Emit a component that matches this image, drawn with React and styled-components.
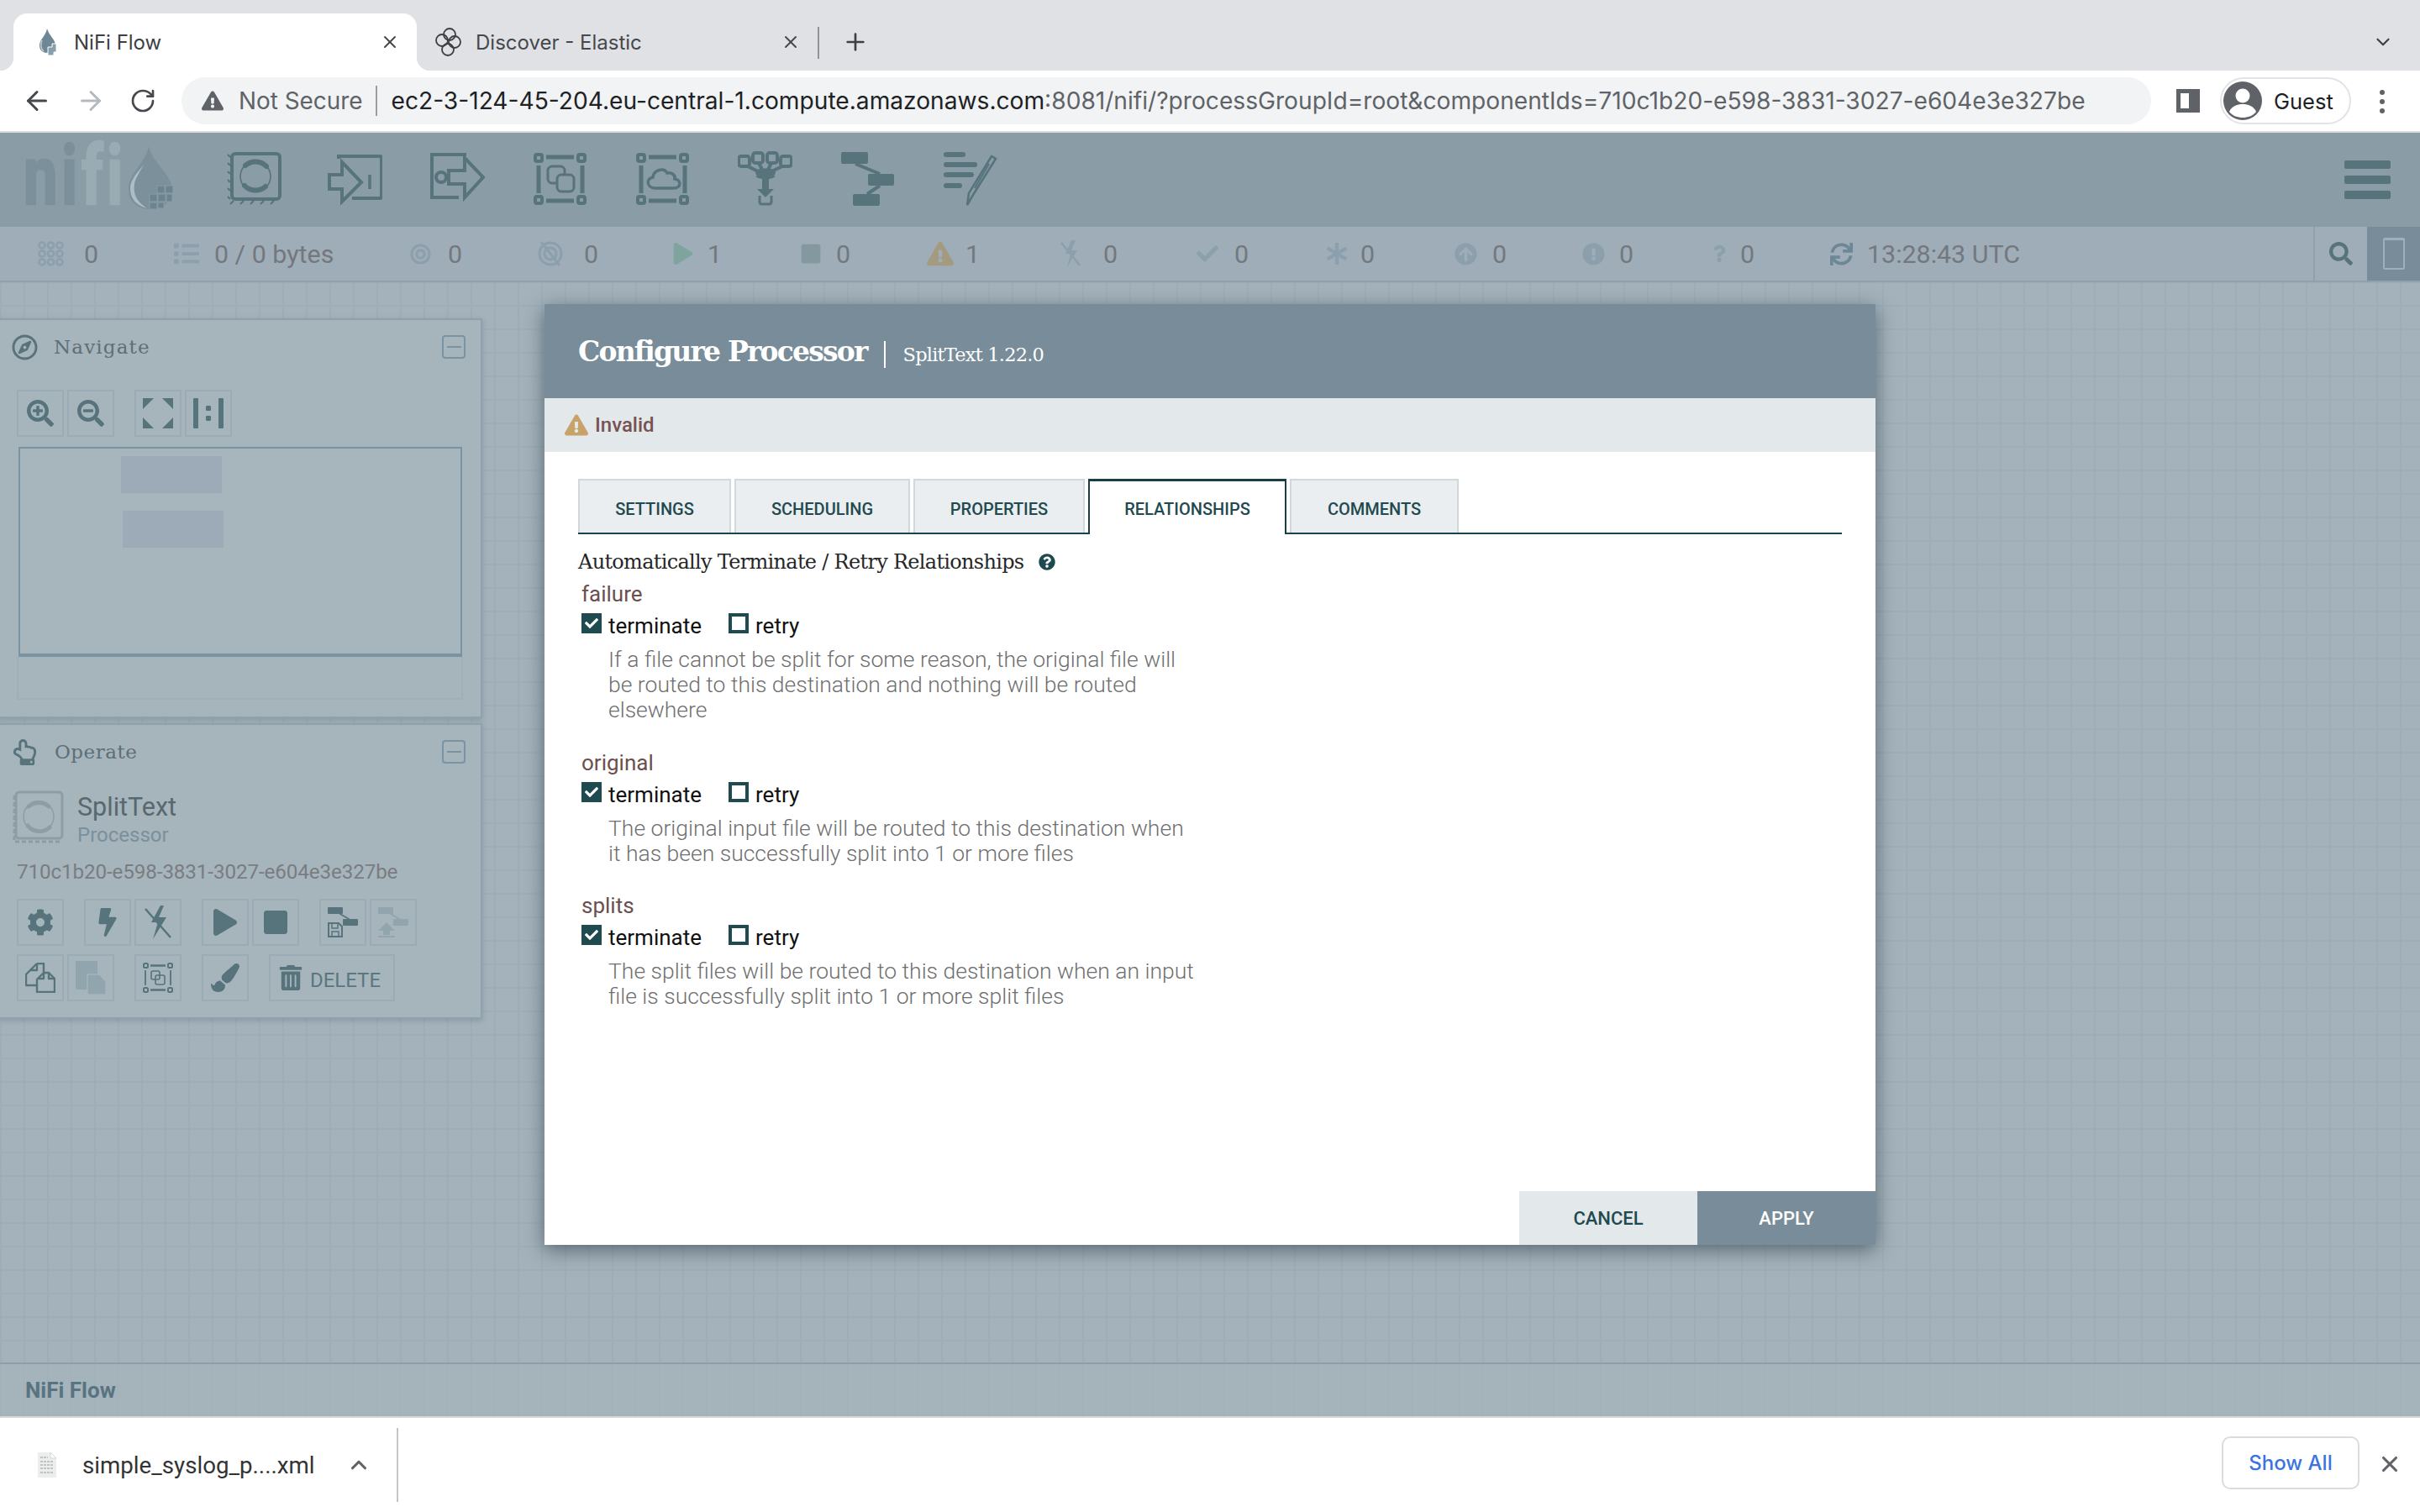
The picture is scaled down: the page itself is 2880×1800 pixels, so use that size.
import React from 'react';
import styled, { createGlobalStyle } from 'styled-components';
import { ArrowLeft, ArrowRight, RotateCw, X, Plus, ChevronDown, ChevronUp } from 'lucide-react';
import {
  FaCog, FaBolt, FaPlay, FaStop, FaSearch, FaTrashAlt, FaPaintBrush, FaRegCompass, FaRegHandPointUp,
  FaExclamationTriangle, FaQuestionCircle, FaCheck, FaSync, FaAsterisk, FaExclamationCircle, FaArrowCircleUp,
  FaQuestion, FaList, FaBullseye, FaSearchPlus, FaSearchMinus,
} from 'react-icons/fa';

const C = '#57737c';
const SLAB = '"DejaVu Serif", "Liberation Serif", serif';
const ROBOTO = 'Roboto, "Liberation Sans", sans-serif';
const UI = 'Inter, "Liberation Sans", sans-serif';

const Global = createGlobalStyle`
  html, body { margin: 0; padding: 0; background: #fff; }
  * { box-sizing: border-box; }
`;

const Page = styled.div`
  width: 2880px; height: 1800px; display: flex; flex-direction: column; overflow: hidden;
  font-family: ${ROBOTO};
`;

/* browser chrome */
const TabStrip = styled.div`
  height: 84px; background: #dfe1e5; display: flex; align-items: flex-end; padding-left: 16px; position: relative;
  font-family: ${UI}; font-size: 24px; color: #3c4043;
`;
const BrowserTab = styled.div`
  height: 68px; width: ${p => p.$w}px; display: flex; align-items: center; padding-left: ${p => p.$pad}px; position: relative;
  background: ${p => (p.$active ? '#fff' : 'transparent')};
  border-radius: 16px 16px 0 0;
  color: ${p => (p.$active ? '#3c4043' : '#45484c')};
  ${p => p.$active && `
    &::before, &::after { content: ''; position: absolute; bottom: 0; width: 16px; height: 16px; }
    &::before { left: -16px; background: radial-gradient(circle at 0 0, transparent 16px, #fff 16.5px); }
    &::after { right: -16px; background: radial-gradient(circle at 100% 0, transparent 16px, #fff 16.5px); }
  `}
`;
const TabTitle = styled.span` flex: 1; margin-left: ${p => p.$ml}px; white-space: nowrap; `;
const TabClose = styled(X)` margin-right: ${p => p.$mr}px; color: #45484c; `;
const TabDivider = styled.div` width: 2px; height: 38px; background: #8f9296; margin: 0 0 14px 0; `;
const NewTab = styled(Plus)` margin: 0 0 18px 27px; color: #3c4043; `;
const StripEnd = styled(ChevronDown)` position: absolute; right: 31px; top: 37px; color: #3c4043; `;

const Toolbar = styled.div`
  height: 74px; background: #fff; border-bottom: 2px solid #dcdcdc; display: flex; align-items: flex-start; padding: 8px 0 0 0;
  font-family: ${UI};
`;
const NavIcons = styled.div` width: 216px; height: 56px; display: flex; align-items: center; padding-left: 26px; gap: 28px; `;
const Omnibox = styled.div`
  width: 2344px; height: 56px; background: #f1f3f4; border-radius: 28px; display: flex; align-items: center; padding-left: 24px;
  font-size: 28.15px; white-space: nowrap;
`;
const NotSecure = styled.span` color: #5f6368; margin-left: 18px; padding-right: 15px; border-right: 2px solid #9a9da1; line-height: 36px; font-size: 27.9px; `;
const UrlHost = styled.span` color: #202124; margin-left: 17px; `;
const UrlRest = styled.span` color: #5f6368; `;
const SidePanel = styled.div`
  width: 28px; height: 28px; margin: 14px 0 0 30px; border: 5px solid #5f6368; border-right-width: 13px; background: #fff;
`;
const GuestPill = styled.div`
  width: 156px; height: 56px; margin-left: 24px; border: 2px solid #e2e3e5; border-radius: 28px; display: flex; align-items: center; padding-left: 2px;
  font-size: 25.5px; color: #202124;
  svg { margin-right: 14px; }
`;
const Kebab = styled.div`
  width: 6px; margin: 15px 0 0 34px; display: flex; flex-direction: column; gap: 5px;
  i { display: block; width: 6px; height: 6px; border-radius: 50%; background: #5f6368; }
`;

/* NiFi header */
const Header = styled.div`
  height: 112px; background: #8a9ca6; display: flex; align-items: flex-start; position: relative; padding-left: 28px;
`;
const LogoText = styled.div`
  width: 122px; height: 112px; font: 700 98px/112px ${ROBOTO}; letter-spacing: 6px; color: #7c909b; white-space: nowrap; margin-top: -4px;
  transform: scaleX(.74); transform-origin: 0 50%; -webkit-text-stroke: 2.5px currentColor;
  span { color: #9aacb3; }
`;
const LogoDrop = styled.div` margin: 16px 0 0 3px; width: 117px; `;
const ToolRow = styled.div` display: flex; gap: 57px; margin-top: 22px; align-items: flex-start; `;
const ToolIcon = styled.svg`
  width: 65px; height: 66px; display: block; fill: none; stroke: ${C}; stroke-width: 4; flex: none;
  margin-right: ${p => p.$mr || 0}px;
`;
const Burger = styled.div`
  position: absolute; right: 35px; top: 33px; width: 55px; display: flex; flex-direction: column; gap: 8px;
  i { display: block; height: 10px; border-radius: 2px; background: ${C}; }
`;

/* status */
const StatusBar = styled.div`
  height: 66px; background: #9eadb7; border-bottom: 2px solid #8fa1ab; display: flex; align-items: center; padding-left: 45px; position: relative;
  font-size: 30.4px; color: #74787e;
`;
const StatusItem = styled.div`
  width: ${p => p.$w}px; display: flex; align-items: center; color: #74787e;
  svg { flex: none; color: ${p => p.$c || '#8ba0ac'}; }
  span { margin-left: ${p => p.$gap || 21}px; white-space: nowrap; }
`;
const StatusEnd = styled.div`
  position: absolute; right: 0; top: 0; height: 64px; display: flex;
`;
const SearchCell = styled.div`
  width: 64px; border-left: 2px solid #8fa1ab; display: flex; align-items: center; justify-content: center; color: ${C};
`;
const FlowCell = styled.div`
  width: 63px; background: #788c99; display: flex; align-items: center; justify-content: center; 
`;
const FlowGlyph = styled.div`
  width: 26px; height: 38px; border: 2px solid #9fb0ba; border-radius: 2px; border-top-width: 3px; 
`;

/* canvas */
const Canvas = styled.div`
  flex: 1; position: relative; background-color: #a3b2bb;
  background-image:
    linear-gradient(to right, #9eaeb7 0, #9eaeb7 2px, transparent 2px),
    linear-gradient(to bottom, #9eaeb7 0, #9eaeb7 2px, transparent 2px);
  background-size: 28px 28px; background-position: 0 -1px;
  padding-top: 43px;
`;
const Panel = styled.div`
  width: 574px; height: ${p => p.$h}px; margin-bottom: ${p => p.$mb || 0}px; background: #a6b4bc;
  border: 2px solid #8ea1ac; border-left: 0;
  box-shadow: 0 2px 6px rgba(60,80,90,.25);
  display: flex; flex-direction: column;
`;
const PanelHead = styled.div`
  height: 54px; margin-top: ${p => p.$mt}px; display: flex; align-items: center; padding: 0 18px 0 14px; color: ${C};
  font: 400 23px/30px ${SLAB}; letter-spacing: 1.15px;
`;
const PanelTitle = styled.span` flex: 1; margin-left: ${p => p.$ml}px; letter-spacing: ${p => p.$ls}px; color: #5d6f77; `;
const Collapse = styled.div`
  width: 28px; height: 28px; border: 2px solid #7a93a3; border-radius: 4px; display: flex; align-items: center; justify-content: center;
  &::after { content: ''; width: 17px; height: 2px; background: #7a93a3; }
`;
const BtnRow = styled.div`
  display: flex; margin: ${p => p.$m || '0'}; padding-left: 20px;
`;
const ToolBtn = styled.div`
  width: ${p => p.$w || 56}px; height: 56px; margin-left: ${p => p.$ml ?? 4}px; flex: none; border: 2px solid #9babb5;
  display: flex; align-items: center; justify-content: center; color: ${p => (p.$dim ? '#91a5ae' : C)};
  font-size: 24px; &:first-child { margin-left: 0; }
`;
const DeleteText = styled.span` margin: 6px 6px 0 8px; font: 400 24px ${ROBOTO}; color: #5a7780; `;
const Birdseye = styled.div`
  margin: 12px 0 0 22px; width: 528px; height: 250px; background: #a7b6bd; border: 2px solid #7a93a3; border-bottom-width: 4px; position: relative;
`;
const BirdBox = styled.div`
  position: absolute; left: ${p => p.$x}px; top: ${p => p.$y}px; width: 120px; height: 44px; background: #9cabb7;
`;
const BirdFoot = styled.div`
  margin-left: 20px; width: 531px; height: 51px; border: 2px solid #9fafb7; border-top: 0;
`;
const ProcInfo = styled.div` display: flex; margin: 19px 0 0 14px; `;
const ProcText = styled.div` margin-left: 16px; `;
const ProcName = styled.div` font: 400 30.5px/36px ${ROBOTO}; color: #57686f; margin-top: 2px; `;
const ProcType = styled.div` font: 400 24px/30px ${ROBOTO}; color: #7a909c; `;
const ProcId = styled.div` font: 400 24.2px/30px ${ROBOTO}; color: #797d82; margin: 14px 0 0 20px; letter-spacing: -.1px; `;

/* modal */
const Modal = styled.div`
  position: absolute; left: 648px; top: 26px; width: 1584px; height: 1120px; background: #fff; display: flex; flex-direction: column;
  box-shadow: 0 6px 22px rgba(30,45,55,.55);
`;
const ModalHead = styled.div`
  height: 112px; background: #788c99; display: flex; align-items: center; padding: 0 0 0 40px; color: #fff;
`;
const ModalTitle = styled.div` font: 700 33px/44px ${SLAB}; letter-spacing: -1.8px; color: #fff; margin-top: 2px; `;
const ModalSub = styled.div`
  margin-left: 20px; padding-left: 21px; border-left: 2px solid #fff; font: 400 22.5px/32px ${SLAB}; letter-spacing: -.8px; color: #fff; margin-top: 7px;
`;
const InvalidBar = styled.div`
  height: 64px; background: #e3e8eb; display: flex; align-items: center; padding-left: 24px; font: 500 24px/30px ${ROBOTO}; color: #775351;
  svg { color: #c9a26a; margin-right: 8px; }
`;
const ModalBody = styled.div` flex: 1; padding: 32px 40px 0 40px; `;
const Tabs = styled.div` display: flex; gap: 4px; height: 66px; border-bottom: 2px solid #1a444b; `;
const TabBtn = styled.div`
  width: ${p => p.$w}px; height: ${p => (p.$active ? 66 : 64)}px; display: flex; align-items: center; justify-content: center;
  font: 500 20px ${ROBOTO}; color: #1f4a4f; padding-top: ${p => (p.$active ? 3 : 6)}px;
  background: ${p => (p.$active ? '#fff' : '#eaeef0')};
  border: 2px solid ${p => (p.$active ? '#164047' : '#cfd9dc')};
  border-bottom: 0;
  border-top-width: ${p => (p.$active ? 3 : 2)}px;
  position: relative; z-index: 1;
`;
const SectionHead = styled.div`
  margin-top: 18px; display: flex; align-items: center; font: 400 24px/30px ${SLAB}; letter-spacing: -.7px; color: #262626;
  svg { margin-left: 18px; color: #1c4a50; }
`;
const RelName = styled.div` margin: ${p => p.$mt}px 0 0 4px; font: 400 26px/30px ${ROBOTO}; color: #6b4f4f; `;
const RelRow = styled.div` display: flex; margin: 8px 0 0 4px; height: 30px; align-items: center; font: 400 26px/30px ${ROBOTO}; color: #111; `;
const Check = styled.span`
  width: 24px; height: 24px; flex: none; margin: -7px 8px 0 ${p => p.$ml || 0}px; display: flex; align-items: center; justify-content: center;
  background: ${p => (p.$on ? '#1f4a4f' : '#fff')}; border: ${p => (p.$on ? 3 : 4)}px solid #1f4a4f; color: #fff;
`;
const RelDesc = styled.div` margin: 10px 0 0 36px; width: 700px; font: 300 26.5px/30px ${ROBOTO}; color: #6f6f6f; `;
const ModalFoot = styled.div` display: flex; justify-content: flex-end; `;
const FootBtn = styled.div`
  width: 212px; height: 64px; display: flex; align-items: center; justify-content: center; font: 500 22px ${ROBOTO};
  background: ${p => (p.$primary ? '#788c99' : '#e3e8eb')}; color: ${p => (p.$primary ? '#fff' : '#1f4a4f')};
`;

/* footers */
const Breadcrumb = styled.div`
  height: 64px; background-color: #a5b3bb; border-top: 2px solid #8b9ea9; padding-left: 30px; display: flex; align-items: center;
  font: 700 26px ${ROBOTO}; color: #587480;
  background-image: linear-gradient(to right, #a2b0b9 0, #a2b0b9 1px, transparent 1px); background-size: 28px 28px;
`;
const Downloads = styled.div`
  height: 114px; background: #fff; border-top: 2px solid #d8d8d8; display: flex; align-items: center; position: relative; font-family: ${UI};
`;
const DlItem = styled.div`
  width: 474px; height: 88px; border-right: 2px solid #c6c6c6; display: flex; align-items: center; padding-left: 45px;
  color: #333; 
`;
const DlName = styled.span` margin-left: 31px; width: 314px; white-space: nowrap; font-family: ${ROBOTO}; font-size: 27.7px; `;
const ShowAll = styled.div`
  position: absolute; left: 2644px; top: 22px; width: 164px; height: 63px; border: 2px solid #dadce0; border-radius: 10px; display: flex; align-items: center; justify-content: center;
  font: 500 24px ${UI}; color: #3b74e0;
`;
const DlClose = styled(X)` position: absolute; left: 2829px; top: 40px; color: #5f6368; `;

const Favicon = () => (
  <svg width="24" height="32" viewBox="0 0 24 32">
    <path d="M10 0c2 8 10 13 10 20 0 6-4 9-9 9-6 0-10-3-10-9C1 13 9 8 10 0Z" fill="#6d8796" />
    <path d="M4 14C2 18 2 24 6 27" stroke="#c4d0d6" strokeWidth="1.5" fill="none" />
    <path d="M11 22h5v-4h5v10h-3v4h-7z" fill="#88a0ad" stroke="#fff" strokeWidth="1" />
  </svg>
);
const ElasticIcon = () => (
  <svg width="32" height="34" viewBox="0 0 32 34" fill="none" stroke="#3c4043" strokeWidth="1.8">
    <circle cx="17" cy="8" r="7" /><circle cx="8" cy="15" r="7" /><circle cx="23" cy="17" r="7" /><circle cx="15" cy="26" r="7" />
  </svg>
);
const PersonIcon = () => (
  <svg width="46" height="46" viewBox="0 0 46 46">
    <circle cx="23" cy="23" r="23" fill="#5f6368" />
    <circle cx="23" cy="17" r="8.5" fill="#fff" />
    <path d="M7 36c3-7 10-9 16-9s13 2 16 9c-4 5-10 7-16 7S11 41 7 36Z" fill="#fff" />
  </svg>
);
const Drop = () => (
  <svg width="56" height="76" viewBox="0 0 56 76">
    <path d="M24 0C27 18 52 34 52 52 52 66 40 75 26 75 10 75 0 66 0 50 0 34 21 18 24 0Z" fill="#7c909b" />
    <path d="M2 50C2 62 8 70 22 74 12 67 5 60 7 45 8 38 14 30 18 22 10 32 2 40 2 50Z" fill="#adbec5" />
    <g fill="#6c8490" stroke="#8a9ca6" strokeWidth="1">
      <rect x="34" y="47" width="9" height="9" /><rect x="44" y="47" width="9" height="9" /><rect x="25" y="57" width="9" height="9" />
      <rect x="35" y="57" width="9" height="9" /><rect x="45" y="57" width="7" height="9" /><rect x="25" y="67" width="9" height="8" /><rect x="35" y="67" width="7" height="7" />
    </g>
  </svg>
);
const IProcessor = () => (
  <ToolIcon viewBox="0 0 65 66" $mr={-2}>
    <rect x="6" y="3" width="57" height="54" rx="4" />
    <path d="M1 4l3 3M1 14l3 3M1 24l3 3M1 34l3 3M1 44l3 3M1 54l3 3M4 63l4-4M16 63l4-4M28 63l4-4M40 63l4-4M52 63l4-4" strokeWidth="2" />
    <circle cx="34" cy="30" r="18" strokeWidth="1.6" />
    <path d="M22 17A18 18 0 0 1 47 18" strokeWidth="6" strokeLinecap="round" />
    <path d="M21 41A18 18 0 0 0 46 42" strokeWidth="6" strokeLinecap="round" />
  </ToolIcon>
);
const IInput = () => (
  <ToolIcon viewBox="0 0 65 66" strokeWidth="3.5">
    <path d="M2 28H17V13L40 37 17 60V45H2Z" /><path d="M13 9V6H62Q64 6 64 8V54Q64 56 62 56H29" /><path d="M50 28V45" strokeWidth="3.5" />
  </ToolIcon>
);
const IOutput = () => (
  <ToolIcon viewBox="0 0 65 66" strokeWidth="3.5">
    <path d="M22 23H41V8L63 31 41 55V39H22Z" /><path d="M41 6V4H2V55H34" /><circle cx="13" cy="31" r="6" />
  </ToolIcon>
);
const Frame = ({ children }) => (
  <>
    {[[3, 4], [54, 4], [3, 54], [54, 54]].map(([x, y]) => (
      <rect key={`${x}${y}`} x={x} y={y} width="8" height="8" rx="2" strokeWidth="4" />
    ))}
    <path d="M16 7H49M16 59H49" strokeWidth="5" /><path d="M7 17V50M59 17V50" strokeWidth="5" />
    {children}
  </>
);
const IGroup = () => (
  <ToolIcon viewBox="0 0 65 66"><Frame>
    <rect x="18" y="18" width="20" height="20" rx="5" strokeWidth="3" /><rect x="29" y="28" width="20" height="20" rx="5" strokeWidth="3" fill="#8a9ca6" />
  </Frame></ToolIcon>
);
const IRemote = () => (
  <ToolIcon viewBox="0 0 65 66"><Frame>
    <path d="M24 44C14 44 12 33 21 31 22 22 34 19 38 26 43 25 48 28 47 33 55 34 55 44 46 44Z" strokeWidth="3.5" />
  </Frame></ToolIcon>
);
const IFunnel = () => (
  <ToolIcon viewBox="0 0 65 66" strokeWidth="2.2">
    <rect x="1" y="6" width="13" height="12" rx="3" /><rect x="18" y="2" width="12" height="12" rx="3" />
    <rect x="35" y="2" width="12" height="12" rx="3" /><rect x="51" y="6" width="13" height="12" rx="3" />
    <path d="M12 18L26 25M25 14L30 24M40 14L35 24M53 18L38 25" />
    <ellipse cx="33" cy="25.5" rx="10" ry="3" fill={C} />
    <path d="M23 29C25 32 41 32 43 29" />
    <rect x="29" y="29" width="8" height="17" fill={C} stroke="none" />
    <path d="M23 45H43L33 55Z" fill={C} stroke="none" />
    <path d="M26 53V60Q26 63 29 63H37Q40 63 40 60V53" strokeWidth="3" />
  </ToolIcon>
);
const ITemplate = () => (
  <ToolIcon viewBox="0 0 65 66" strokeWidth="2">
    <path d="M18 15L47 27M47 41L32 51" />
    <rect x="1" y="1" width="32" height="14" rx="2" fill={C} stroke="none" />
    <rect x="33" y="27" width="31" height="14" rx="2" fill={C} stroke="none" />
    <rect x="15" y="51" width="32" height="14" rx="2" fill={C} stroke="none" />
  </ToolIcon>
);
const ILabel = () => (
  <ToolIcon viewBox="0 0 65 66">
    <path d="M4 4H24M4 16H38M4 28H34M4 41H20" strokeWidth="6" strokeLinecap="round" />
    <path d="M63 9L36 52 29 64 31 50 58 6Z" strokeWidth="2.5" />
    <path d="M38 44L55 15" strokeWidth="2" />
  </ToolIcon>
);
const ProcessorBig = () => (
  <svg width="62" height="64" viewBox="0 0 62 64" fill="none" stroke="#8f9ca5">
    <rect x="5" y="2" width="55" height="55" rx="4" strokeWidth="3" />
    <path d="M3 6V60M4 61H60" strokeWidth="3" strokeDasharray="5 3" />
    <circle cx="32" cy="31" r="18" strokeWidth="1.5" />
    <path d="M20 19A18 18 0 0 1 44 19" strokeWidth="5" strokeLinecap="round" />
    <path d="M19 42A18 18 0 0 0 45 44" strokeWidth="5" strokeLinecap="round" />
  </svg>
);
const Fit = () => (
  <svg width="36" height="36" viewBox="0 0 36 36" fill={C}>
    <path d="M0 0H13L0 13ZM36 0H23L36 13ZM0 36H13L0 23ZM36 36H23L36 23Z" />
  </svg>
);
const OneToOne = () => (
  <svg width="36" height="36" viewBox="0 0 36 36" fill={C}>
    <rect x="0" y="0" width="6" height="36" rx="1" /><rect x="30" y="0" width="6" height="36" rx="1" />
    <rect x="15" y="9" width="6" height="6" rx="1" /><rect x="15" y="21" width="6" height="6" rx="1" />
  </svg>
);
const SaveTemplate = () => (
  <svg width="36" height="36" viewBox="0 0 36 36">
    <path d="M8 4L32 18" stroke={C} strokeWidth="1.5" />
    <rect x="0" y="0" width="18" height="8" rx="1" fill={C} /><rect x="18" y="14" width="18" height="8" rx="1" fill={C} />
    <path d="M1 19H13L17 23V35H1Z" fill="none" stroke={C} strokeWidth="2" /><path d="M5 19V25H12V19M5 35V29H13V35" fill="none" stroke={C} strokeWidth="1.5" />
  </svg>
);
const UploadTemplate = () => (
  <svg width="36" height="36" viewBox="0 0 36 36" fill="#91a5ae">
    <path d="M8 4L32 18" stroke="#91a5ae" strokeWidth="1.5" />
    <rect x="0" y="0" width="18" height="8" rx="1" /><rect x="18" y="14" width="18" height="8" rx="1" />
    <path d="M10 18L20 28H14V33H6V28H0Z" /><rect x="0" y="34" width="20" height="2" />
  </svg>
);
const CopyIcon = () => (
  <svg width="36" height="36" viewBox="0 0 36 36" fill="none" stroke={C} strokeWidth="2.4" strokeLinejoin="round">
    <path d="M14 1H22V12M14 1V9H6L1 14V27H14" />
    <path d="M14 1L6 9" />
    <path d="M22 12H28L35 19V35H14V20L22 12V19H14M28 12V19H35" />
  </svg>
);
const Paste = () => (
  <svg width="36" height="40" viewBox="0 0 36 40" fill="#91a5ae">
    <rect x="0" y="0" width="26" height="34" rx="2" /><path d="M14 16H28L36 24V40H14Z" stroke="#a6b4bc" strokeWidth="1.5" />
  </svg>
);
const GroupMini = () => (
  <svg width="36" height="36" viewBox="0 0 36 36" fill="none" stroke={C}>
    <rect x="1" y="1" width="5" height="5" rx="1.5" strokeWidth="2" /><rect x="30" y="1" width="5" height="5" rx="1.5" strokeWidth="2" />
    <rect x="1" y="30" width="5" height="5" rx="1.5" strokeWidth="2" /><rect x="30" y="30" width="5" height="5" rx="1.5" strokeWidth="2" />
    <path d="M9 3.5H27M9 32.5H27" strokeWidth="2.5" /><path d="M3 9V27M33 9V27" strokeWidth="1.8" />
    <rect x="10" y="10" width="10" height="10" rx="2" strokeWidth="1.6" /><rect x="15" y="15" width="11" height="11" rx="2" strokeWidth="1.6" />
  </svg>
);
const GridDots = () => (
  <svg width="31" height="30" viewBox="0 0 31 30" fill="none" stroke="#8ba0ac" strokeWidth="2.5">
    {[5, 15, 25].flatMap(y => [5, 15.5, 26].map(x => <circle key={`${x}-${y}`} cx={x} cy={y} r="3.6" />))}
  </svg>
);
const NoTarget = () => (
  <svg width="30" height="32" viewBox="0 0 30 32" fill="none" stroke="#8ba0ac" strokeWidth="3">
    <circle cx="15" cy="16" r="13" /><circle cx="15" cy="16" r="7" /><path d="M4 2L26 30" />
  </svg>
);
const NoBolt = () => (
  <svg width="28" height="32" viewBox="0 0 28 32">
    <path d="M15 0L8 16h6L10 32 22 12h-7L20 0Z" fill="#8ba0ac" /><path d="M3 3L25 30" stroke="#8ba0ac" strokeWidth="2.5" />
  </svg>
);
const DocIcon = () => (
  <svg width="22" height="30" viewBox="0 0 22 30">
    <path d="M0 0H15L22 7V30H0Z" fill="#eceded" /><path d="M15 0V7H22Z" fill="#fff" stroke="#d5d5d5" />
    <path d="M3 6H12M3 11H19M3 15H19M3 19H19M3 24H19" stroke="#b4b4b4" strokeWidth="1.6" strokeDasharray="3 1" />
  </svg>
);

const statusItems = [
  { w: 162, icon: <GridDots />, text: '0', gap: 24 },
  { w: 281, icon: <FaList size={30} />, text: '0 / 0 bytes', gap: 18 },
  { w: 152, icon: <FaBullseye size={25} />, text: '0', gap: 20 },
  { w: 160, icon: <NoTarget />, text: '0', gap: 25 },
  { w: 152, icon: <FaPlay size={26} />, text: '1', gap: 16, c: '#7fa49e' },
  { w: 151, icon: <FaStop size={26} />, text: '0', gap: 17, c: '#84999f' },
  { w: 157, icon: <FaExclamationTriangle size={32} />, text: '1', gap: 14, c: '#a39a80' },
  { w: 164, icon: <NoBolt />, text: '0', gap: 25 },
  { w: 154, icon: <FaCheck size={26} />, text: '0', gap: 19 },
  { w: 153, icon: <FaAsterisk size={26} />, text: '0', gap: 15 },
  { w: 152, icon: <FaArrowCircleUp size={27} />, text: '0', gap: 18 },
  { w: 153, icon: <FaExclamationCircle size={27} />, text: '0', gap: 17 },
  { w: 142, icon: <FaQuestion size={20} />, text: '0', gap: 15 },
  { w: 240, icon: <FaSync size={27} color="#6d8796" />, text: '13:28:43 UTC', gap: 17 },
];

const relationships = [
  { name: 'failure', mt: 8, desc: 'If a file cannot be split for some reason, the original file will be routed to this destination and nothing will be routed elsewhere' },
  { name: 'original', mt: 33, desc: 'The original input file will be routed to this destination when it has been successfully split into 1 or more files' },
  { name: 'splits', mt: 32, desc: 'The split files will be routed to this destination when an input file is successfully split into 1 or more split files' },
];

export default function App() {
  return (
    <Page>
      <Global />
      <TabStrip>
        <BrowserTab $active $w={480} $pad={30}>
          <Favicon />
          <TabTitle $ml={18}>NiFi Flow</TabTitle>
          <TabClose size={24} $mr={20} />
        </BrowserTab>
        <BrowserTab $w={477} $pad={22}>
          <ElasticIcon />
          <TabTitle $ml={16}>Discover - Elastic</TabTitle>
          <TabClose size={24} $mr={20} />
        </BrowserTab>
        <TabDivider />
        <NewTab size={32} />
        <StripEnd size={26} />
      </TabStrip>
      <Toolbar>
        <NavIcons>
          <ArrowLeft size={36} color="#45484c" strokeWidth={2} />
          <ArrowRight size={36} color="#b5b9bd" strokeWidth={2} />
          <RotateCw size={32} color="#45484c" strokeWidth={2} />
        </NavIcons>
        <Omnibox>
          <FaExclamationTriangle size={26} color="#5f6368" />
          <NotSecure>Not Secure</NotSecure>
          <UrlHost>ec2-3-124-45-204.eu-central-1.compute.amazonaws.com</UrlHost>
          <UrlRest>:8081/nifi/?processGroupId=root&amp;componentIds=710c1b20-e598-3831-3027-e604e3e327be</UrlRest>
        </Omnibox>
        <SidePanel />
        <GuestPill>
          <PersonIcon />
          Guest
        </GuestPill>
        <Kebab><i /><i /><i /></Kebab>
      </Toolbar>

      <Header>
        <LogoText>ni<span>fi</span></LogoText>
        <LogoDrop><Drop /></LogoDrop>
        <ToolRow>
          <IProcessor /><IInput /><IOutput /><IGroup /><IRemote /><IFunnel /><ITemplate /><ILabel />
        </ToolRow>
        <Burger><i /><i /><i /></Burger>
      </Header>

      <StatusBar>
        {statusItems.map((s, i) => (
          <StatusItem key={i} $w={s.w} $gap={s.gap} $c={s.c}>
            {s.icon}<span>{s.text}</span>
          </StatusItem>
        ))}
        <StatusEnd>
          <SearchCell><FaSearch size={28} /></SearchCell>
          <FlowCell><FlowGlyph /></FlowCell>
        </StatusEnd>
      </StatusBar>

      <Canvas>
        <Panel $h={476} $mb={6}>
          <PanelHead $mt={5}>
            <FaRegCompass size={31} />
            <PanelTitle $ml={19} $ls={1.15}>Navigate</PanelTitle>
            <Collapse />
          </PanelHead>
          <BtnRow $m="24px 0 0 0">
            <ToolBtn><FaSearchPlus size={32} /></ToolBtn>
            <ToolBtn><FaSearchMinus size={32} /></ToolBtn>
            <ToolBtn $ml={24}><Fit /></ToolBtn>
            <ToolBtn><OneToOne /></ToolBtn>
          </BtnRow>
          <Birdseye>
            <BirdBox $x={120} $y={9} />
            <BirdBox $x={122} $y={74} />
          </Birdseye>
          <BirdFoot />
        </Panel>
        <Panel $h={352}>
          <PanelHead $mt={5}>
            <FaRegHandPointUp size={31} />
            <PanelTitle $ml={20} $ls={.5}>Operate</PanelTitle>
            <Collapse />
          </PanelHead>
          <ProcInfo>
            <ProcessorBig />
            <ProcText>
              <ProcName>SplitText</ProcName>
              <ProcType>Processor</ProcType>
            </ProcText>
          </ProcInfo>
          <ProcId>710c1b20-e598-3831-3027-e604e3e327be</ProcId>
          <BtnRow $m="17px 0 0 0">
            <ToolBtn><FaCog size={32} /></ToolBtn>
            <ToolBtn $ml={24}><FaBolt size={34} /></ToolBtn>
            <ToolBtn>
              <svg width="34" height="40" viewBox="0 0 34 40"><path d="M20 0L9 20h8l-6 20 16-26h-9l6-14Z" fill={C} /><path d="M2 4L32 38" stroke={C} strokeWidth="2.5" /></svg>
            </ToolBtn>
            <ToolBtn $ml={24}><FaPlay size={32} /></ToolBtn>
            <ToolBtn><FaStop size={32} /></ToolBtn>
            <ToolBtn $ml={24}><SaveTemplate /></ToolBtn>
            <ToolBtn $dim><UploadTemplate /></ToolBtn>
          </BtnRow>
          <BtnRow $m="10px 0 0 0">
            <ToolBtn><CopyIcon /></ToolBtn>
            <ToolBtn $dim><Paste /></ToolBtn>
            <ToolBtn $ml={24}><GroupMini /></ToolBtn>
            <ToolBtn $ml={24}><FaPaintBrush size={34} /></ToolBtn>
            <ToolBtn $ml={24} $w={150}><FaTrashAlt size={30} /><DeleteText>DELETE</DeleteText></ToolBtn>
          </BtnRow>
        </Panel>

        <Modal>
          <ModalHead>
            <ModalTitle>Configure Processor</ModalTitle>
            <ModalSub>SplitText 1.22.0</ModalSub>
          </ModalHead>
          <InvalidBar><FaExclamationTriangle size={28} />Invalid</InvalidBar>
          <ModalBody>
            <Tabs>
              <TabBtn $w={182}>SETTINGS</TabBtn>
              <TabBtn $w={209}>SCHEDULING</TabBtn>
              <TabBtn $w={204}>PROPERTIES</TabBtn>
              <TabBtn $active $w={236}>RELATIONSHIPS</TabBtn>
              <TabBtn $w={201}>COMMENTS</TabBtn>
            </Tabs>
            <SectionHead>Automatically Terminate / Retry Relationships<FaQuestionCircle size={20} /></SectionHead>
            {relationships.map(r => (
              <React.Fragment key={r.name}>
                <RelName $mt={r.mt}>{r.name}</RelName>
                <RelRow>
                  <Check $on><FaCheck size={16} /></Check>terminate
                  <Check $ml={32} />retry
                </RelRow>
                <RelDesc>{r.desc}</RelDesc>
              </React.Fragment>
            ))}
          </ModalBody>
          <ModalFoot>
            <FootBtn>CANCEL</FootBtn>
            <FootBtn $primary>APPLY</FootBtn>
          </ModalFoot>
        </Modal>
      </Canvas>

      <Breadcrumb>NiFi Flow</Breadcrumb>
      <Downloads>
        <DlItem>
          <DocIcon />
          <DlName>simple_syslog_p....xml</DlName>
          <ChevronUp size={30} color="#5f6368" strokeWidth={2.5} />
        </DlItem>
        <ShowAll>Show All</ShowAll>
        <DlClose size={30} strokeWidth={2.5} />
      </Downloads>
    </Page>
  );
}
